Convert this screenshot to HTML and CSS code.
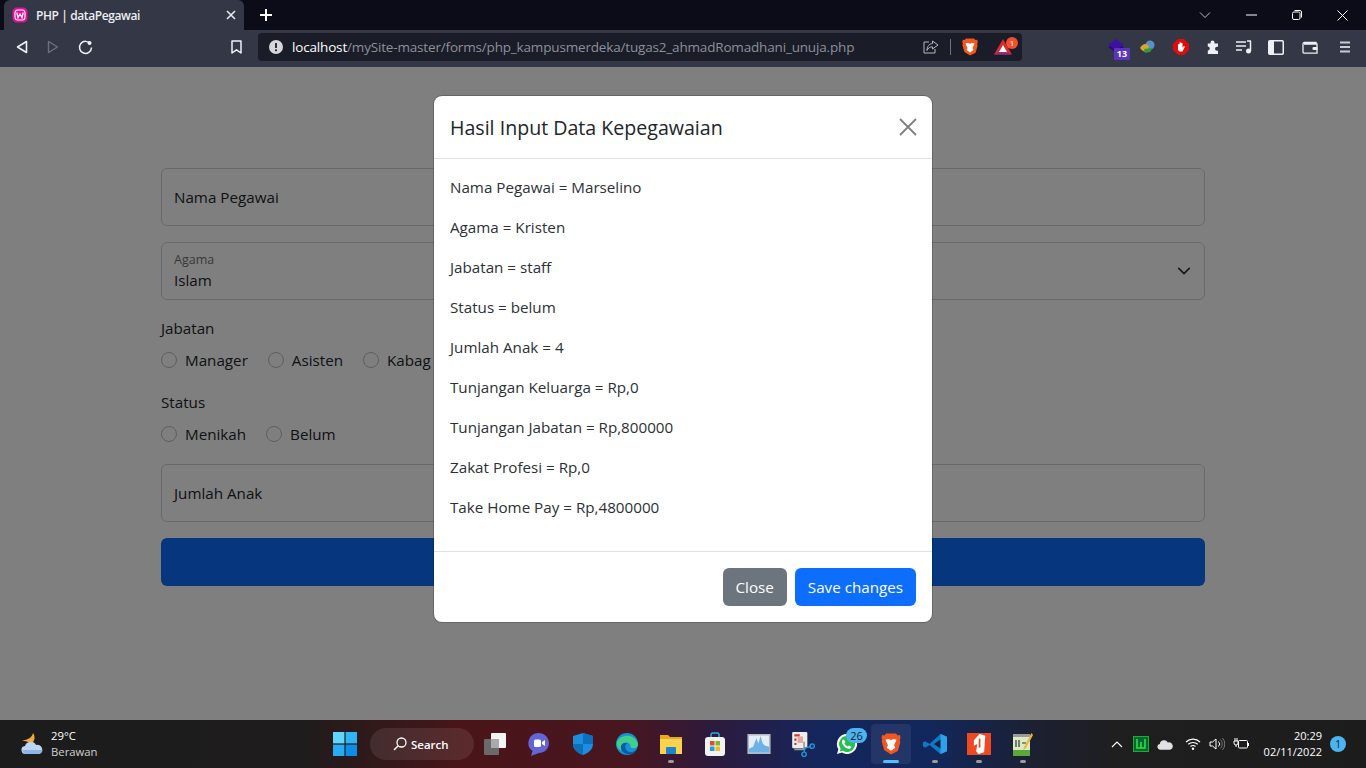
FILE: index.html
```html
<!DOCTYPE html>
<html lang="id">
<head>
    <meta charset="UTF-8">
    <title>PHP | dataPegawai</title>
    <link rel="stylesheet" href="styles.css">
</head>
<body>
    <div class="tabbar">
        <div class="tab">
            <svg class="tab-icon" width="16" height="16" viewBox="0 0 16 16"><rect x="0.5" y="0.5" width="15" height="15" rx="4.5" fill="#e6109a"/><rect x="3" y="3" width="10" height="10" rx="3" fill="none" stroke="#fff" stroke-width="1.1"/><path d="M4.8 5.5l1.2 5 2-3.6 2 3.6 1.2-5" fill="none" stroke="#fff" stroke-width="1.2"/></svg>
            <span class="tab-title">PHP | dataPegawai</span>
            <svg class="tab-close" width="10" height="10" viewBox="0 0 10 10"><path d="M1 1l8 8M9 1l-8 8" stroke="#e6e8ee" stroke-width="1.6"/></svg>
        </div>
        <svg class="new-tab" width="14" height="14" viewBox="0 0 14 14"><path d="M7 1v12M1 7h12" stroke="#fff" stroke-width="2"/></svg>
        <div class="window-controls">
            <svg width="12" height="8" viewBox="0 0 12 8"><path d="M1 1.5l5 5 5-5" fill="none" stroke="#b9bcc6" stroke-width="1"/></svg>
            <svg width="11" height="2" viewBox="0 0 11 2"><path d="M0 1h11" stroke="#fff" stroke-width="1"/></svg>
            <svg width="10" height="10" viewBox="0 0 10 10"><rect x="0.5" y="2" width="7.5" height="7.5" rx="1.5" fill="none" stroke="#fff"/><path d="M2.5 .5h5.5a1.5 1.5 0 0 1 1.5 1.5v5.5" fill="none" stroke="#fff"/></svg>
            <svg width="11" height="11" viewBox="0 0 11 11"><path d="M.5.5l10 10M10.5.5l-10 10" stroke="#fff" stroke-width="1"/></svg>
        </div>
    </div>

    <div class="toolbar">
        <div class="nav-buttons">
            <svg width="12" height="14" viewBox="0 0 12 14"><path d="M10.5 1.5v11L1.5 7z" fill="none" stroke="#f0f1f5" stroke-width="1.6" stroke-linejoin="round"/></svg>
            <svg width="12" height="14" viewBox="0 0 12 14"><path d="M1.5 1.5v11l9-5.5z" fill="none" stroke="#6c7080" stroke-width="1.4" stroke-linejoin="round"/></svg>
            <svg width="15" height="15" viewBox="0 0 15 15"><path d="M12.6 4.2A6 6 0 1 0 13.5 7.5" fill="none" stroke="#f0f1f5" stroke-width="1.5"/><circle cx="11.5" cy="3" r="2" fill="#f0f1f5"/></svg>
        </div>
        <svg class="bookmark" width="11" height="14" viewBox="0 0 11 14"><path d="M1 1h9v12L5.5 9.8 1 13z" fill="none" stroke="#f0f1f5" stroke-width="1.5" stroke-linejoin="round"/></svg>
        <div class="address">
            <svg width="14" height="14" viewBox="0 0 14 14"><circle cx="7" cy="7" r="7" fill="#d5d7dd"/><path d="M7 3v5" stroke="#1a1c27" stroke-width="1.8"/><circle cx="7" cy="10.3" r="1.1" fill="#1a1c27"/></svg>
            <div class="url"><span class="url-host">localhost</span>/mySite-master/forms/php_kampusmerdeka/tugas2_ahmadRomadhani_unuja.php</div>
            <svg class="share" width="16" height="14" viewBox="0 0 16 14"><path d="M6 2H1v11h11V9" fill="none" stroke="#b4b7c1"/><path d="M9.5 1l5.500 4-5.500 4V6.800C7 6.800 5 8 4 10.500 4 6.500 6 3.800 9.500 3.500z" fill="none" stroke="#b4b7c1"/></svg>
            <div class="address-sep"></div>
            <svg class="brave" width="16" height="18" viewBox="0 0 16 18"><path d="M4 .5h8l1.5 1.5 1.7-.3.6 2-.6 2.5.4 1.500-2 7L8 17.500 2.400 14l-2-7 .4-1.500L.2 3.700l.6-2L2.500 2z" fill="#f1571f"/><path d="M3.500 5.500L6 5l2 .8L10 5l2.500.5L10.500 10l1 2L8 14.500 4.500 12l1-2z" fill="#fff"/></svg>
            <div class="rewards">
                <svg width="18" height="16" viewBox="0 0 18 16"><path d="M9 0l9 15.500H0z" fill="#d92b2b"/><path d="M0 15.500l4-2h10l4 2z" fill="#7b2d9c"/><path d="M9 6l4 7H5z" fill="#fff"/></svg>
                <span class="rewards-badge">1</span>
            </div>
        </div>
        <div class="extensions">
            <div class="ext-stack">
                <svg width="16" height="14" viewBox="0 0 16 14"><path d="M8 0l8 6-8 6-8-6z" fill="#3d10a0"/><path d="M0 8l8 6 8-6-2-1-6 4-6-4z" fill="#2d0a80"/></svg>
                <span class="ext-count">13</span>
            </div>
            <svg width="17" height="14" viewBox="0 0 17 14"><circle cx="10" cy="5" r="4.5" fill="#5b8fc9"/><path d="M0 8c3-5 6-5 9-2l-2 6C5 12 2 11 0 8z" fill="#d9a52a"/><path d="M4 9l9-1-3 4-5 1z" fill="#2f9a37"/></svg>
            <svg width="16" height="16" viewBox="0 0 16 16"><path d="M5 0h6l5 5v6l-5 5H5l-5-5V5z" fill="#e00b0b"/><path d="M5 11V5.500a.8.8 0 0 1 1.500 0V8V3.800a.8.8 0 0 1 1.500 0V8V4.200a.8.8 0 0 1 1.500 0V8.500l1.200-1.200c.7-.5 1.300.2 1 .7L9.500 12.500H6.500z" fill="#fff"/></svg>
            <svg width="15" height="15" viewBox="0 0 15 15"><path d="M5.500 2.500a2 2 0 0 1 4 0V3.500H13v3.300h-1a2 2 0 0 0 0 4h1V14H2.800v-3.500a2 2 0 0 0 0-4V3.500h2.700z" fill="#eef0f4"/></svg>
            <svg width="16" height="14" viewBox="0 0 16 14"><path d="M0 2h10M0 6h10M0 10h6" stroke="#eef0f4" stroke-width="1.5"/><path d="M14.5 1v10" stroke="#eef0f4" stroke-width="1.5"/><path d="M11 1h4" stroke="#eef0f4" stroke-width="1.5"/><circle cx="12.5" cy="11" r="2.5" fill="#eef0f4"/></svg>
            <svg width="16" height="15" viewBox="0 0 16 15"><rect x=".75" y=".75" width="14.5" height="13.5" rx="1" fill="none" stroke="#eef0f4" stroke-width="1.5"/><rect x="1" y="1" width="5" height="13" fill="#eef0f4"/></svg>
            <svg class="ext-wallet" width="16" height="13" viewBox="0 0 16 13"><path d="M14 3V1.500H2.500C1.500 1.500 1 2 1 3v8c0 .8.500 1.200 1.300 1.200H15V3H2" fill="none" stroke="#eef0f4" stroke-width="1.3"/><rect x="10.5" y="6" width="5" height="3" rx="1" fill="#eef0f4"/></svg>
            <svg class="ext-menu" width="10" height="12" viewBox="0 0 10 12"><path d="M0 1.500h10M0 6h10M0 10.500h10" stroke="#c9cbd2" stroke-width="1.8"/></svg>
        </div>
    </div>

    <div class="page">
        <form class="form-wrap">
            <div class="field">Nama Pegawai</div>
            <div class="field field-select">
                <div>
                    <div class="float-label">Agama</div>
                    <div class="float-value">Islam</div>
                </div>
                <svg width="14" height="14" viewBox="0 0 16 16"><path d="M2 5l6 6 6-6" fill="none" stroke="#343a40" stroke-width="2" stroke-linecap="round" stroke-linejoin="round"/></svg>
            </div>
            <div class="radio-group">
                <div class="group-label">Jabatan</div>
                <div class="radio-row">
                    <label class="radio"><span class="radio-dot"></span>Manager</label>
                    <label class="radio"><span class="radio-dot"></span>Asisten</label>
                    <label class="radio"><span class="radio-dot"></span>Kabag</label>
                </div>
            </div>
            <div class="radio-group">
                <div class="group-label">Status</div>
                <div class="radio-row">
                    <label class="radio"><span class="radio-dot"></span>Menikah</label>
                    <label class="radio"><span class="radio-dot"></span>Belum</label>
                </div>
            </div>
            <div class="field field-last">Jumlah Anak</div>
            <div class="submit-bar"></div>
        </form>

        <div class="backdrop"></div>

        <div class="modal">
            <div class="modal-header">
                <div class="modal-title">Hasil Input Data Kepegawaian</div>
                <svg width="18" height="18" viewBox="0 0 18 18"><path d="M1 1l16 16M17 1L1 17" stroke="#7f7f7f" stroke-width="1.8"/></svg>
            </div>
            <div class="modal-body">
                <p>Nama Pegawai = Marselino</p>
                <p>Agama = Kristen</p>
                <p>Jabatan = staff</p>
                <p>Status = belum</p>
                <p>Jumlah Anak = 4</p>
                <p>Tunjangan Keluarga = Rp,0</p>
                <p>Tunjangan Jabatan = Rp,800000</p>
                <p>Zakat Profesi = Rp,0</p>
                <p>Take Home Pay = Rp,4800000</p>
            </div>
            <div class="modal-footer">
                <button class="btn btn-close" type="button">Close</button>
                <button class="btn btn-save" type="button">Save changes</button>
            </div>
        </div>
    </div>

    <div class="taskbar">
        <div class="weather">
            <svg width="26" height="24" viewBox="0 0 26 24"><path d="M14 1a7 7 0 0 1-1 10L2 8c5 1 11-2 12-7z" fill="#f2a93b"/><path d="M7 22a4 4 0 0 1-1-8 6 6 0 0 1 11-1 4.500 4.500 0 0 1 3 9z" fill="#bcd5f2"/><path d="M3.500 18h20a4.500 4.500 0 0 1-3.500 4H7a4 4 0 0 1-3.500-4z" fill="#8fb4e6"/></svg>
            <div class="weather-text">
                <div class="weather-temp">29°C</div>
                <div class="weather-desc">Berawan</div>
            </div>
        </div>
        <div class="task-center">
            <svg class="start" width="24" height="24" viewBox="0 0 24 24"><rect width="11.4" height="11.4" fill="#5fd6fb"/><rect x="12.6" width="11.4" height="11.4" fill="#2fb5f5"/><rect y="12.6" width="11.4" height="11.4" fill="#26acf3"/><rect x="12.6" y="12.6" width="11.4" height="11.4" fill="#0a8fe8"/></svg>
            <div class="search">
                <svg width="14" height="14" viewBox="0 0 14 14"><circle cx="8.5" cy="5.500" r="4.500" fill="none" stroke="#fff" stroke-width="1.3"/><path d="M5.200 8.800L1 13" stroke="#fff" stroke-width="1.5"/></svg>
                <span>Search</span>
            </div>
            <div class="task-icons">
                <div class="task-item"><svg width="24" height="24" viewBox="0 0 24 24"><rect x="8" y="1" width="15" height="15" rx="1" fill="#f4f4f4"/><rect x="1" y="7" width="15" height="16" rx="1" fill="#6a6a6a"/><rect x="8" y="7" width="8" height="9" fill="#aaa"/></svg></div>
                <div class="task-item"><svg width="24" height="26" viewBox="0 0 24 26"><path d="M12 2a10 10 0 0 1 10 10c0 6-5 10-10 10l-8 3 1.500-5A10 10 0 0 1 12 2z" fill="#6264d7"/><rect x="7" y="8.500" width="7" height="7.500" rx="1.500" fill="#fff"/><path d="M15 11l3-2v6l-3-2z" fill="#fff"/></svg></div>
                <div class="task-item"><svg width="22" height="24" viewBox="0 0 22 24"><path d="M11 1l10 3v8c0 6-5 9-10 11C6 21 1 18 1 12V4z" fill="#1b8fdc"/><path d="M11 1l10 3v8H11zM1 12h10v11C6 21 1 18 1 12z" fill="#0e6fbd"/></svg></div>
                <div class="task-item"><svg width="24" height="24" viewBox="0 0 24 24"><circle cx="12" cy="12" r="11" fill="#1492d6"/><path d="M2 10C5 2 20 1 23 12c0 3-3 5-6 4-3-1 0-4-4-5C7 10 4 14 7 19 3 17 1 14 2 10z" fill="#3ed08a"/><path d="M7 19c-3-5 0-9 6-8-4 1-4 8 2 9 2 .5 5-.5 7-3-2 5-9 8-15 2z" fill="#0c59a4"/></svg></div>
                <div class="task-item is-open"><svg width="24" height="22" viewBox="0 0 24 22"><path d="M1 2h8l2 2h12v17H1z" fill="#e8a921"/><path d="M1 6h22v15H1z" fill="#fbd24e"/><rect x="7" y="14" width="10" height="7" rx="1" fill="#1b86cf"/></svg></div>
                <div class="task-item"><svg width="20" height="24" viewBox="0 0 20 24"><path d="M6 6V3a2 2 0 0 1 2-2h4a2 2 0 0 1 2 2v3" fill="none" stroke="#2ea6e8" stroke-width="1.5"/><rect y="5" width="20" height="19" rx="3" fill="#f2f2f2"/><rect x="5" y="9" width="4.500" height="4.500" fill="#ea4d25"/><rect x="10.500" y="9" width="4.500" height="4.500" fill="#7cb82a"/><rect x="5" y="14.500" width="4.500" height="4.500" fill="#1aa1e8"/><rect x="10.500" y="14.500" width="4.500" height="4.500" fill="#fab81b"/></svg></div>
                <div class="task-item"><svg width="24" height="20" viewBox="0 0 22 19"><rect width="22" height="19" fill="#b3b9c0"/><rect x="1.500" y="1.500" width="19" height="16" fill="#e3eef8"/><path d="M1.500 14l4-2 3-8 2 5 2-7 2 7 2 2 4 1v5.500h-19z" fill="#6cb2e6"/></svg></div>
                <div class="task-item"><svg width="24" height="26" viewBox="0 0 22 24"><rect x="1" y="1" width="14" height="15" rx="1" fill="#ededed"/><path d="M3 3h5v2H3zM3 7h2v2H3zM3 11h2v2H3z" fill="#d43a26"/><rect x="6" y="5" width="5" height="6" fill="#e7a79f"/><path d="M12 10v7h-9" stroke="#999" stroke-width="1.5" fill="none"/><circle cx="19.500" cy="14" r="2" fill="none" stroke="#1c96dc" stroke-width="1.3"/><circle cx="12" cy="21.500" r="2" fill="none" stroke="#1c96dc" stroke-width="1.3"/><path d="M12 19.500l1-4 5-1" stroke="#1c96dc" fill="none" stroke-width="1.2"/></svg></div>
                <div class="task-item task-whatsapp">
                    <svg width="22" height="22" viewBox="0 0 22 22"><path d="M11 1a10 10 0 1 1-5 18.600L1 21l1.400-4.800A10 10 0 0 1 11 1z" fill="#fff"/><path d="M11 3a8 8 0 1 1-4.300 14.700L3.800 18.500l.8-2.800A8 8 0 0 1 11 3z" fill="#27c04f"/><path d="M8 6.500l1.300 2.500-1 1.300c.8 1.500 2 2.700 3.500 3.300l1.200-1 2.400 1.200c-.3 1.500-1.500 2.200-2.800 2-3.500-.6-6-3.200-6.600-6.500C5.800 7.500 6.500 6.500 8 6.500z" fill="#fff"/></svg>
                    <span class="wa-badge">26</span>
                </div>
                <div class="task-item is-active">
                    <svg width="20" height="22" viewBox="0 0 16 18"><path d="M4 .5h8l1.500 1.500 1.700-.3.600 2-.6 2.500.4 1.500-2 7L8 17.500 2.400 14l-2-7 .4-1.500L.2 3.700l.6-2L2.500 2z" fill="#f1571f"/><path d="M3.500 5.500L6 5l2 .8L10 5l2.500.5L10.500 10l1 2L8 14.500 4.500 12l1-2z" fill="#fff"/></svg>
                </div>
                <div class="task-item is-open"><svg width="24" height="22" viewBox="0 0 22 24" preserveAspectRatio="none"><path d="M16 1l6 3v16l-6 3-10-10-4 3-2-1.500V10l2-1 4 3z" fill="#0a7bc9"/><path d="M16 1l6 3v16l-6 3z" fill="#2aa3ea"/><path d="M16 7v10l-6-5z" fill="#1a1f3c"/></svg></div>
                <div class="task-item is-open"><svg width="24" height="22" viewBox="0 0 21 24" preserveAspectRatio="none"><rect width="21" height="24" fill="#ee4a22"/><path d="M11 1l5 2-1 18-5 2-2-3 1-8-3 2V8z" fill="#fff"/><path d="M11 6v10" stroke="#ee4a22" stroke-width="1.5"/></svg></div>
                <div class="task-item is-open"><svg width="20" height="24" viewBox="0 0 20 24"><rect y="2" width="17" height="22" fill="#dcebc6"/><rect y="2" width="17" height="3" fill="#9a9a9a"/><rect y="18" width="17" height="6" fill="#5ba83a"/><path d="M3 8v7M6 8v7M9 11h4" stroke="#333" stroke-width="1.2"/><path d="M18.500 1L11 15l-1 3 3-2L20 3z" fill="#e8b93a"/></svg></div>
            </div>
        </div>
        <div class="tray">
            <svg class="tray-chevron" width="12" height="7" viewBox="0 0 12 7"><path d="M1 6l5-5 5 5" fill="none" stroke="#fff" stroke-width="1.2"/></svg>
            <svg width="16" height="16" viewBox="0 0 16 16"><rect x=".5" y=".5" width="15" height="15" fill="#063" stroke="#1fb02b"/><path d="M4 3v9h8V3M8 6v6" fill="none" stroke="#2fe03a" stroke-width="1.6"/></svg>
            <svg class="tray-cloud" width="16" height="11" viewBox="0 0 17 11"><path d="M4 11a3 3 0 0 1-1-6 4.500 4.500 0 0 1 8.500-1.500A3.500 3.500 0 0 1 14 11z" fill="#dfe1e4"/></svg>
            <svg width="16" height="12" viewBox="0 0 16 12"><path d="M1 4a10 10 0 0 1 14 0M3.300 6.300a7 7 0 0 1 9.400 0M5.500 8.500a4 4 0 0 1 5 0" fill="none" stroke="#fff" stroke-width="1.2"/><circle cx="8" cy="10.800" r="1.200" fill="#fff"/></svg>
            <svg width="16" height="14" viewBox="0 0 16 14"><path d="M1 5h2.500L7 2v10L3.500 9H1z" fill="none" stroke="#fff"/><path d="M9.500 4.500a3.500 3.500 0 0 1 0 5" fill="none" stroke="#fff"/><path d="M11.500 2.500a6.500 6.500 0 0 1 0 9M13.500 1a9 9 0 0 1 0 12" fill="none" stroke="#777"/></svg>
            <svg width="16" height="12" viewBox="0 0 16 12"><path d="M2 0v3M4 0v3M1 3h4v2a2 2 0 0 1-4 0zM3 7v2" stroke="#fff" fill="none"/><rect x="5.500" y="2.500" width="9" height="7.500" rx="1" fill="none" stroke="#fff"/><path d="M15.500 5v3" stroke="#fff"/></svg>
            <div class="clock">
                <div>20:29</div>
                <div>02/11/2022</div>
            </div>
            <span class="notif">1</span>
        </div>
    </div>
</body>
</html>
```

FILE: styles.css
```css
* {
    box-sizing: border-box;
}

html, body {
    height: 100%;
}

body {
    margin: 0;
    width: 1366px;
    height: 768px;
    overflow: hidden;
    display: flex;
    flex-direction: column;
    font-family: "Open Sans", "Noto Sans", sans-serif;
    background-color: #fff;
}

svg {
    display: block;
    flex-shrink: 0;
}

/* tab strip */
.tabbar {
    height: 30px;
    background-color: #0b0c17;
    display: flex;
    align-items: center;
    padding-left: 4px;
}

.tab {
    width: 240px;
    height: 30px;
    background-color: #343746;
    border-radius: 6px 6px 0 0;
    display: flex;
    align-items: center;
    padding: 0 8px;
}

.tab-icon {
    margin-right: 8px;
}

.tab-title {
    flex: 1;
    color: #eceef3;
    font-size: 12px;
    font-weight: 600;
    letter-spacing: -0.4px;
}

.new-tab {
    margin-left: 15px;
}

.window-controls {
    margin-left: auto;
    display: flex;
    align-items: center;
    gap: 35px;
    padding-right: 18px;
}

/* toolbar */
.toolbar {
    height: 37px;
    background-color: #343746;
    display: flex;
    align-items: center;
    padding: 0 0 3px 16px;
}

.nav-buttons {
    display: flex;
    align-items: center;
    gap: 19px;
}

.bookmark {
    margin-left: 138px;
}

.address {
    width: 764px;
    height: 28px;
    margin-left: 16px;
    background-color: #1a1c27;
    border-radius: 4px;
    display: flex;
    align-items: center;
    padding: 0 7px 0 11px;
}

.url {
    flex: 1;
    margin-left: 9px;
    font-size: 13.5px;
    letter-spacing: -0.17px;
    color: #8c909c;
    white-space: nowrap;
}

.url-host {
    color: #fff;
}

.share {
    margin-right: 11px;
}

.address-sep {
    width: 1px;
    height: 16px;
    background-color: #6f7280;
    margin-right: 11px;
}

.brave {
    margin-right: 16px;
}

.rewards {
    position: relative;
    margin-right: 3px;
}

.rewards-badge {
    position: absolute;
    top: -2px;
    right: -6px;
    width: 12px;
    height: 12px;
    border-radius: 50%;
    background-color: #f0502e;
    color: #fff;
    font-size: 8px;
    line-height: 12px;
    text-align: center;
}

.extensions {
    display: flex;
    align-items: center;
    gap: 16px;
    margin-left: 86px;
}

.ext-wallet {
    margin-left: 2px;
}

.ext-menu {
    margin-left: 6px;
}

.ext-stack {
    position: relative;
    width: 16px;
    height: 16px;
}

.ext-count {
    position: absolute;
    left: 6px;
    top: 9px;
    width: 16px;
    height: 12px;
    background-color: #5b35c0;
    border-radius: 1px;
    color: #fff;
    font-size: 9px;
    font-weight: 700;
    line-height: 12px;
    text-align: center;
}

/* page */
.page {
    position: relative;
    flex: 1;
    overflow: hidden;
    font-size: 15.2px;
    color: #212529;
}

.form-wrap {
    width: 1044px;
    margin: 0 auto;
    padding-top: 101px;
}

.field {
    height: 58px;
    border: 1px solid #ced4da;
    border-radius: 6px;
    padding: 0 12px;
    display: flex;
    align-items: center;
    margin-bottom: 16px;
}

.field-select {
    justify-content: space-between;
    padding-right: 13px;
}

.field-last {
    margin-top: 14px;
}

.float-label {
    font-size: 12.5px;
    line-height: 18px;
    opacity: 0.65;
}

.float-value {
    line-height: 22px;
}

.radio-group {
    margin-bottom: 18px;
}

.group-label {
    line-height: 24px;
    margin-bottom: 8px;
}

.radio-row {
    display: flex;
    gap: 20px;
}

.radio {
    display: flex;
    align-items: center;
    gap: 8px;
    line-height: 24px;
}

.radio-dot {
    width: 16px;
    height: 16px;
    border: 1px solid #b8bcc0;
    border-radius: 50%;
    background-color: #fff;
}

.submit-bar {
    height: 48px;
    background-color: #0d6efd;
    border-radius: 6px;
}

.backdrop {
    position: absolute;
    inset: 0;
    background-color: rgba(0, 0, 0, 0.5);
}

.modal {
    position: absolute;
    left: 434px;
    top: 29px;
    width: 498px;
    height: 526px;
    background-color: #fff;
    border-radius: 8px;
    box-shadow: 0 0 0 1px rgba(0, 0, 0, 0.2);
    display: flex;
    flex-direction: column;
}

.modal-header {
    height: 63px;
    padding: 0 15px 0 16px;
    border-bottom: 1px solid #dee2e6;
    display: flex;
    align-items: center;
    justify-content: space-between;
}

.modal-title {
    font-size: 19.6px;
    font-weight: 500;
}

.modal-body {
    flex: 1;
    padding: 16px;
}

.modal-body p {
    margin: 0 0 16px;
    line-height: 24px;
    color: #2c3136;
}

.modal-footer {
    height: 71px;
    border-top: 1px solid #dee2e6;
    display: flex;
    align-items: center;
    justify-content: flex-end;
    gap: 8px;
    padding: 0 16px;
}

.btn {
    height: 38px;
    border: none;
    border-radius: 6px;
    color: #fff;
    font-family: inherit;
    font-size: 15.2px;
    padding: 0 13px;
}

.btn-close {
    background-color: #6c757d;
}

.btn-save {
    background-color: #0d6efd;
}

/* taskbar */
.taskbar {
    height: 48px;
    background: linear-gradient(90deg, #1c1c1c 0, #1e1c1c 22%, #4a1518 34%, #481620 46%, #2e1a3c 52%, #14265c 60%, #12275c 68%, #1c2030 76%, #1f1f1f 82%, #1c1c1c 100%);
    display: flex;
    align-items: center;
    color: #fff;
    position: relative;
}

.weather {
    width: 330px;
    padding-left: 19px;
    display: flex;
    align-items: center;
    gap: 6px;
    flex-shrink: 0;
}

.weather-text {
    font-size: 11.3px;
    line-height: 16px;
}

.weather-desc {
    color: #d0d0d0;
}

.task-center {
    display: flex;
    align-items: center;
    flex-shrink: 0;
}

.start {
    margin-left: 3px;
}

.search {
    width: 104px;
    height: 32px;
    margin-left: 13px;
    border-radius: 16px;
    background-color: rgba(255, 255, 255, 0.09);
    display: flex;
    align-items: center;
    gap: 4px;
    padding-left: 23px;
    font-size: 11.5px;
    font-weight: 600;
}

.task-icons {
    display: flex;
    align-items: center;
    margin-left: -1px;
}

.task-item {
    position: relative;
    width: 44px;
    height: 40px;
    display: flex;
    align-items: center;
    justify-content: center;
}

.is-open::after,
.is-active::after {
    content: "";
    position: absolute;
    bottom: 1px;
    left: 19px;
    width: 6px;
    height: 3px;
    border-radius: 2px;
    background-color: #9a9a9a;
}

.is-active::before {
    content: "";
    position: absolute;
    inset: 0 2px;
    background-color: rgba(255, 255, 255, 0.07);
    border-radius: 4px;
}

.is-active svg {
    position: relative;
}

.is-active::after {
    left: 14px;
    width: 16px;
    background-color: #4cc2ff;
}

.wa-badge {
    position: absolute;
    top: 4px;
    right: 2px;
    width: 21px;
    height: 15px;
    border-radius: 8px;
    background-color: #4cb4ee;
    color: #10202e;
    font-size: 11px;
    line-height: 15px;
    text-align: center;
}

.tray {
    margin-left: auto;
    display: flex;
    align-items: center;
    gap: 8px;
    padding-right: 20px;
}

.tray-chevron {
    margin-right: 2px;
}

.tray-cloud {
    margin-right: 4px;
}

.clock {
    margin-left: 7px;
    text-align: right;
    font-size: 11px;
    line-height: 16px;
}

.notif {
    width: 16px;
    height: 16px;
    border-radius: 50%;
    background-color: #4cb4ee;
    color: #10202e;
    font-size: 10px;
    line-height: 16px;
    text-align: center;
}
```
